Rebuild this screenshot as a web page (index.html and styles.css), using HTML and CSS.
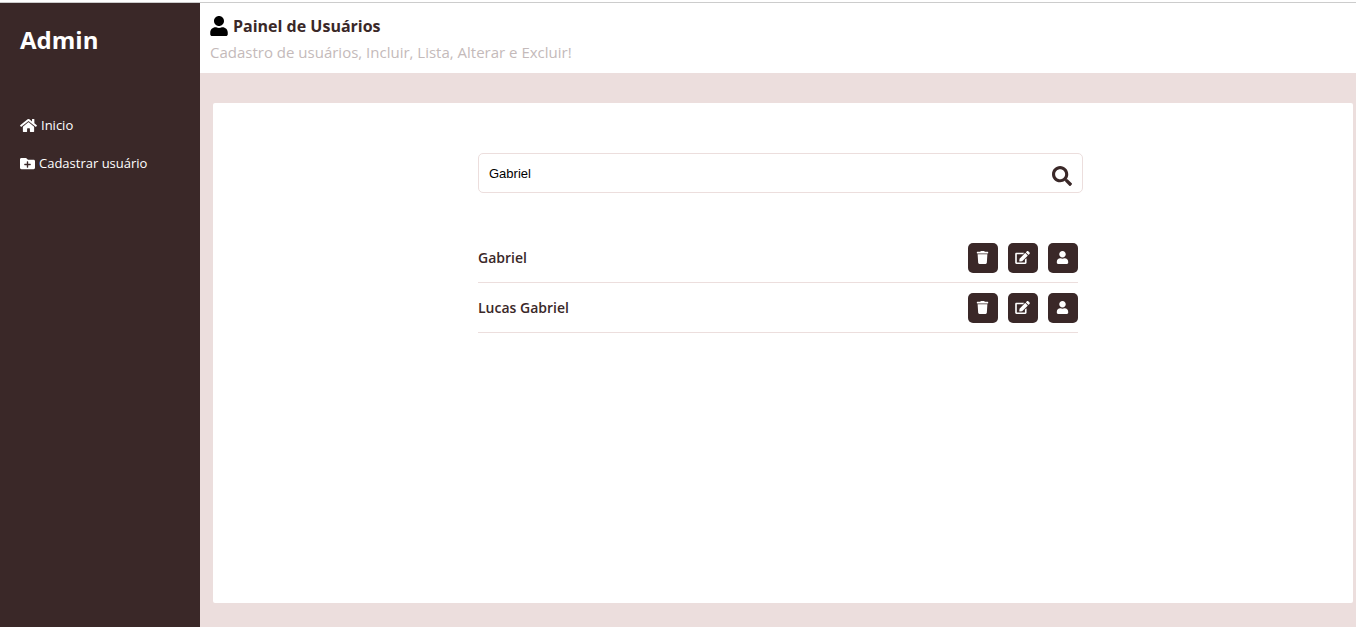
FILE: index.html
```html
<!DOCTYPE html>
<html lang="pt-BR">
<head>
<meta charset="utf-8">
<meta name="viewport" content="width=device-width, initial-scale=1">
<title>Painel de Usuários</title>
<link rel="stylesheet" href="styles.css">
</head>
<body>
<svg class="sprite" aria-hidden="true">
  <symbol id="user" viewBox="0 0 448 512"><path d="M224 256c70.7 0 128-57.3 128-128S294.7 0 224 0 96 57.3 96 128s57.3 128 128 128zm89.6 32h-16.7c-22.2 10.2-46.9 16-72.9 16s-50.6-5.8-72.9-16h-16.7C60.2 288 0 348.2 0 422.4V464c0 26.5 21.5 48 48 48h352c26.5 0 48-21.5 48-48v-41.6c0-74.2-60.2-134.4-134.4-134.4z"/></symbol>
  <symbol id="trash" viewBox="0 0 448 512"><path d="M432 32H312l-9.4-18.7A24 24 0 0 0 281.1 0H166.8a23.72 23.72 0 0 0-21.4 13.3L136 32H16A16 16 0 0 0 0 48v32a16 16 0 0 0 16 16h416a16 16 0 0 0 16-16V48a16 16 0 0 0-16-16zM53.2 467a48 48 0 0 0 47.9 45h245.8a48 48 0 0 0 47.9-45L416 128H32z"/></symbol>
  <symbol id="edit" viewBox="0 0 576 512"><path d="M402.6 83.2l90.2 90.2c3.8 3.8 3.8 10 0 13.8L274.4 405.6l-92.8 10.3c-12.4 1.4-22.9-9.1-21.5-21.5l10.3-92.8L388.8 83.2c3.8-3.8 10-3.8 13.8 0zm162-22.9l-48.8-48.8c-15.2-15.2-39.9-15.2-55.2 0l-35.4 35.4c-3.8 3.8-3.8 10 0 13.8l90.2 90.2c3.8 3.8 10 3.8 13.8 0l35.4-35.4c15.2-15.3 15.2-40 0-55.2zM384 346.2V448H64V128h229.8c3.2 0 6.2-1.3 8.5-3.5l40-40c7.6-7.6 2.2-20.5-8.5-20.5H48C21.5 64 0 85.5 0 112v352c0 26.5 21.5 48 48 48h352c26.5 0 48-21.5 48-48V306.2c0-10.7-12.9-16-20.5-8.5l-40 40c-2.2 2.3-3.5 5.3-3.5 8.5z"/></symbol>
  <symbol id="search" viewBox="0 0 512 512"><path d="M505 442.7L405.3 343c-4.5-4.5-10.6-7-17-7H372c27.6-35.3 44-79.7 44-128C416 93.1 322.9 0 208 0S0 93.1 0 208s93.1 208 208 208c48.3 0 92.7-16.4 128-44v16.3c0 6.4 2.5 12.5 7 17l99.7 99.7c9.4 9.4 24.6 9.4 33.9 0l28.3-28.3c9.4-9.4 9.4-24.6.1-34zM208 336c-70.7 0-128-57.2-128-128 0-70.7 57.2-128 128-128 70.7 0 128 57.2 128 128 0 70.7-57.2 128-128 128z"/></symbol>
  <symbol id="home" viewBox="0 0 576 512"><path d="M280.37 148.26L96 300.11V464a16 16 0 0 0 16 16l112.06-.29a16 16 0 0 0 15.92-16V368a16 16 0 0 1 16-16h64a16 16 0 0 1 16 16v95.64a16 16 0 0 0 16 16.05L464 480a16 16 0 0 0 16-16V300L295.67 148.26a12.19 12.19 0 0 0-15.3 0zM571.6 251.47L488 182.56V44.05a12 12 0 0 0-12-12h-56a12 12 0 0 0-12 12v72.61L318.47 43a48 48 0 0 0-61 0L4.34 251.47a12 12 0 0 0-1.6 16.9l25.5 31A12 12 0 0 0 45.15 301l235.22-193.74a12.19 12.19 0 0 1 15.3 0L530.9 301a12 12 0 0 0 16.9-1.6l25.5-31a12 12 0 0 0-1.7-16.93z"/></symbol>
  <symbol id="folder-plus" viewBox="0 0 512 512"><path d="M464 128H272l-64-64H48C21.49 64 0 85.49 0 112v288c0 26.51 21.49 48 48 48h416c26.51 0 48-21.49 48-48V176c0-26.51-21.49-48-48-48zm-96 168c0 8.84-7.16 16-16 16h-72v72c0 8.84-7.16 16-16 16h-16c-8.84 0-16-7.16-16-16v-72h-72c-8.84 0-16-7.16-16-16v-16c0-8.84 7.16-16 16-16h72v-72c0-8.84 7.16-16 16-16h16c8.84 0 16 7.16 16 16v72h72c8.84 0 16 7.16 16 16v16z"/></symbol>
</svg>
<div class="topline"></div>
<div class="app">
  <aside class="sidebar">
    <h1 class="brand">Admin</h1>
    <nav class="menu">
      <a class="menu-link" href="#"><svg class="icon-home"><use href="#home"/></svg>Inicio</a>
      <a class="menu-link" href="#"><svg class="icon-folder"><use href="#folder-plus"/></svg>Cadastrar usuário</a>
    </nav>
  </aside>
  <div class="main">
    <header class="header">
      <h2 class="title"><svg class="icon-title"><use href="#user"/></svg>Painel de Usuários</h2>
      <p class="subtitle">Cadastro de usuários, Incluir, Lista, Alterar e Excluir!</p>
    </header>
    <main class="content">
      <section class="card">
        <div class="panel">
          <form class="search">
            <input class="search-input" type="text" value="Gabriel" aria-label="Pesquisar usuário">
            <button class="search-button" type="button" aria-label="Pesquisar"><svg class="icon-search"><use href="#search"/></svg></button>
          </form>
          <ul class="users">
            <li class="user">
              <span class="user-name">Gabriel</span>
              <button class="action" type="button" aria-label="Excluir"><svg class="icon-action"><use href="#trash"/></svg></button>
              <button class="action" type="button" aria-label="Alterar"><svg class="icon-action"><use href="#edit"/></svg></button>
              <button class="action" type="button" aria-label="Ver usuário"><svg class="icon-action"><use href="#user"/></svg></button>
            </li>
            <li class="user">
              <span class="user-name">Lucas Gabriel</span>
              <button class="action" type="button" aria-label="Excluir"><svg class="icon-action"><use href="#trash"/></svg></button>
              <button class="action" type="button" aria-label="Alterar"><svg class="icon-action"><use href="#edit"/></svg></button>
              <button class="action" type="button" aria-label="Ver usuário"><svg class="icon-action"><use href="#user"/></svg></button>
            </li>
          </ul>
        </div>
      </section>
    </main>
  </div>
</div>
</body>
</html>
```
FILE: styles.css
```css
* {
  box-sizing: border-box;
  margin: 0;
  padding: 0;
}

body {
  display: flex;
  flex-direction: column;
  min-height: 100vh;
  background: #fff;
  color: #3a2828;
  font-family: "Open Sans", "Noto Sans", sans-serif;
}

svg {
  display: block;
  flex: none;
  fill: currentColor;
}

.sprite {
  display: none;
}

.topline {
  height: 3px;
  border-bottom: 1px solid #ccc;
}

.app {
  display: flex;
  flex: 1;
}

.sidebar {
  flex: none;
  width: 200px;
  padding: 20px;
  background: #3a2828;
  color: #fff;
}

.brand {
  font-size: 24px;
  line-height: 34px;
  font-weight: 700;
}

.menu {
  display: flex;
  flex-direction: column;
  gap: 18px;
  margin-top: 58px;
}

.menu-link {
  display: flex;
  align-items: center;
  gap: 4px;
  color: #fff;
  font-size: 13px;
  line-height: 20px;
  text-decoration: none;
}

.icon-home {
  width: 17px;
  height: 15px;
}

.icon-folder {
  width: 15px;
  height: 15px;
}

.main {
  display: flex;
  flex: 1;
  flex-direction: column;
  min-width: 0;
  background: #ecdedd;
}

.header {
  padding: 10px 10px 8px;
  background: #fff;
}

.title {
  display: flex;
  align-items: center;
  gap: 5px;
  font-size: 16px;
  line-height: 26px;
  font-weight: 700;
}

.icon-title {
  width: 18px;
  height: 20px;
  color: #000;
}

.subtitle {
  color: #c4baba;
  font-size: 15px;
  line-height: 26px;
}

.content {
  padding: 30px 3px 24px 13px;
}

.card {
  min-height: 500px;
  padding: 50px 20px;
  border-radius: 2px;
  background: #fff;
}

.panel {
  max-width: 610px;
  margin: 0 auto;
}

.search {
  display: flex;
  align-items: center;
  height: 40px;
  margin-right: 5px;
  border: 1px solid #ecdedd;
  border-radius: 5px;
}

.search-input {
  flex: 1;
  min-width: 0;
  padding: 0 10px;
  border: 0;
  outline: 0;
  background: none;
  color: #000;
  font-family: "Liberation Sans", Arial, sans-serif;
  font-size: 13px;
}

.search-button {
  padding: 5px 10px 0;
  border: 0;
  background: none;
  color: #3a2828;
}

.icon-search {
  width: 20px;
  height: 20px;
}

.users {
  margin: 40px 10px 0 0;
  list-style: none;
}

.user {
  display: flex;
  align-items: center;
  gap: 10px;
  padding: 10px 0 9px;
  border-bottom: 1px solid #ecdedd;
}

.user-name {
  flex: 1;
  font-size: 14px;
  line-height: 20px;
  font-weight: 600;
}

.action {
  display: flex;
  align-items: center;
  justify-content: center;
  width: 30px;
  height: 30px;
  padding: 0 1px 1px 0;
  border: 0;
  border-radius: 5px;
  background: #3a2828;
  color: #fff;
}

.icon-action {
  width: 15px;
  height: 13px;
}
```
